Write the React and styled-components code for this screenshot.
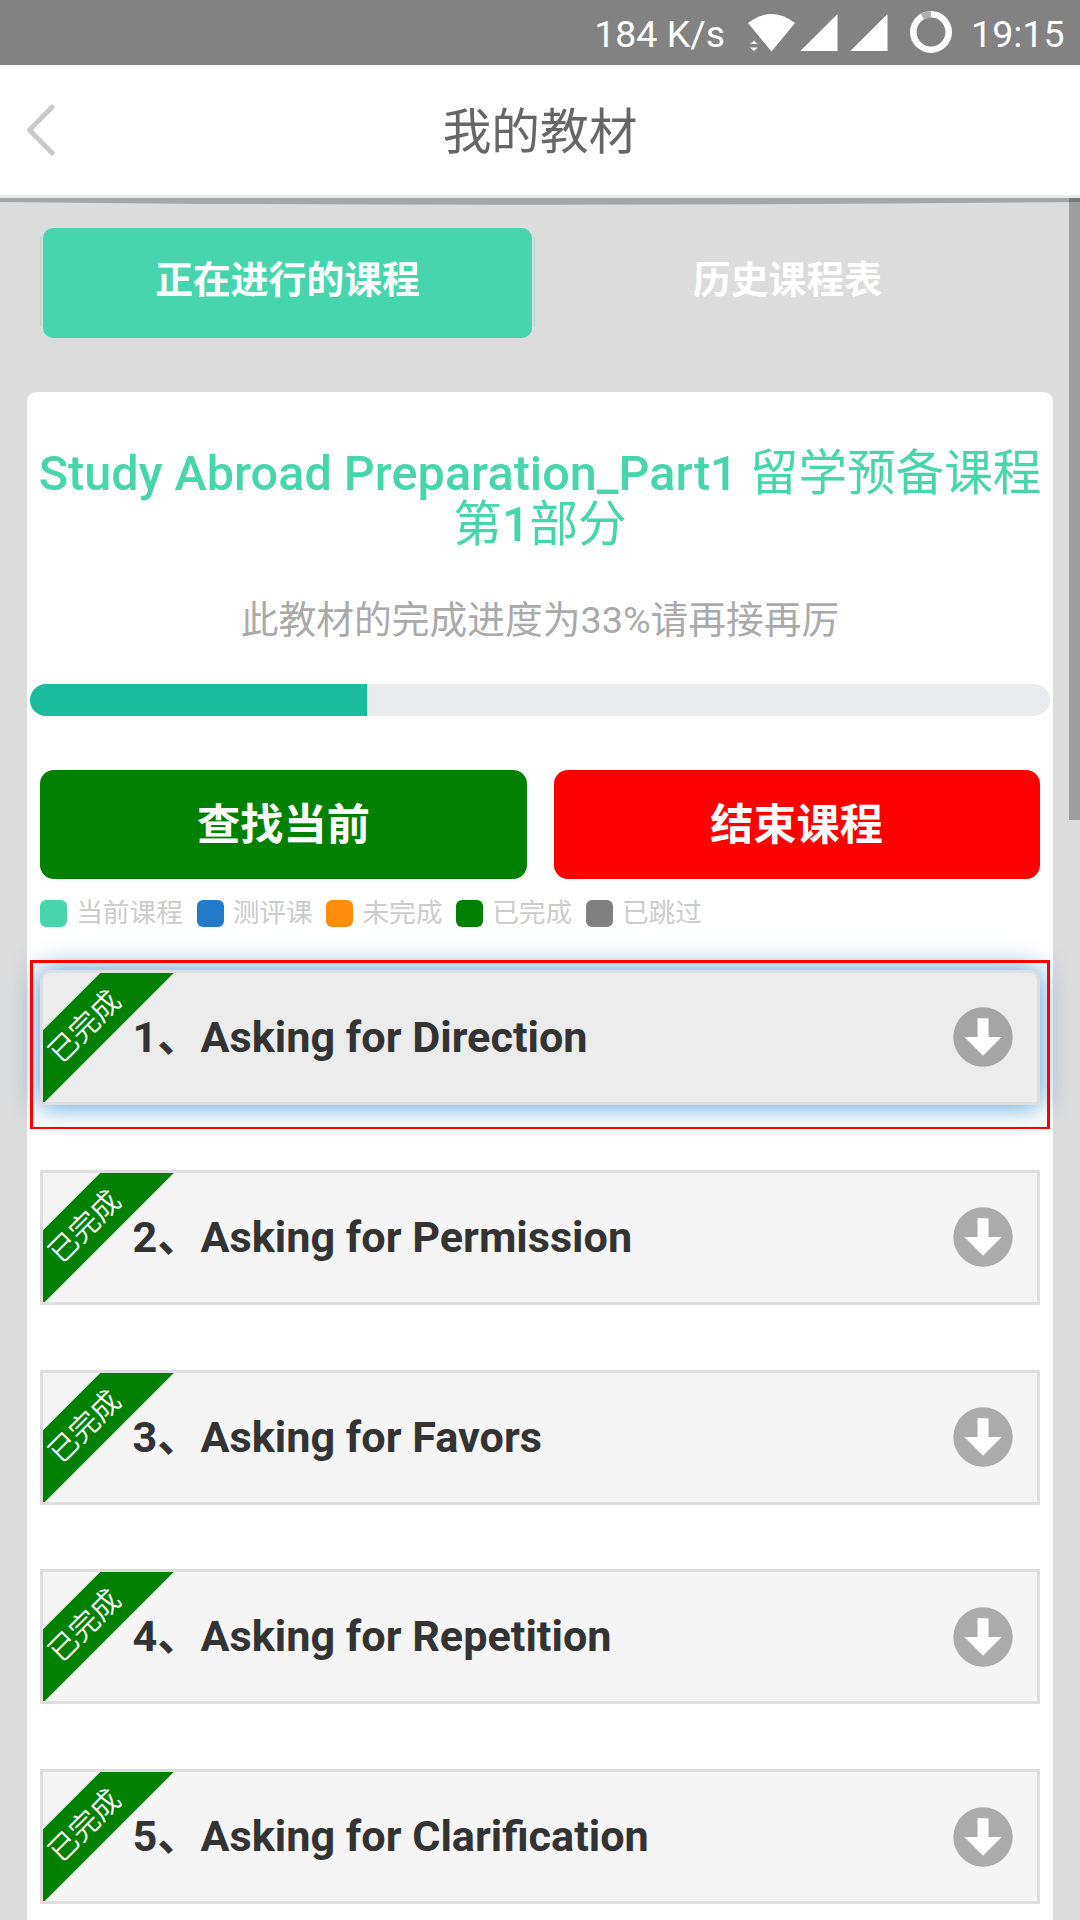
import styled, { createGlobalStyle } from "styled-components";

const lessons = [
  { id: 1, title: "Asking for Direction" },
  { id: 2, title: "Asking for Permission" },
  { id: 3, title: "Asking for Favors" },
  { id: 4, title: "Asking for Repetition" },
  { id: 5, title: "Asking for Clarification" },
];

const legend = [
  { label: "当前课程", color: "#47d5ae" },
  { label: "测评课", color: "#217bc8" },
  { label: "未完成", color: "#ff8c0a" },
  { label: "已完成", color: "#008000" },
  { label: "已跳过", color: "#808080" },
];

const progress = 33;

const StatusIcons = () => (
  <svg width="206" height="65" viewBox="0 0 206 65" fill="#fff">
    <path d="M2 23 Q25.5 5 49 23 L25.5 51.5 Z" />
    <path d="M3 44.5 L8 40 L13 44.5 Z M3 47 L13 47 L8 51.5 Z" stroke="#828282" strokeWidth="1" />
    <path d="M54.3 51 L91.5 14 V51 Z" />
    <path d="M104.3 51 L141.5 14 V51 Z" />
    <circle cx="185" cy="32" r="17.7" fill="none" stroke="#fff" strokeWidth="6.6" />
    <path d="M176.3 16.6 A17.7 17.7 0 0 1 185 14.3" fill="none" stroke="#b0b0b0" strokeWidth="6.8" />
  </svg>
);

const BackIcon = () => (
  <svg width="28" height="52" viewBox="0 0 28 52">
    <path d="M26.5 1.5 L2.5 26 L26.5 50.5" fill="none" stroke="#c8c8c8" strokeWidth="4.8" />
  </svg>
);

const DownIcon = ({ color }) => (
  <svg width="60" height="60" viewBox="0 0 60 60">
    <circle cx="30" cy="30" r="29.7" fill={color} />
    <path d="M24.5 11.3 H35.5 V30 H48.7 L30 48.7 L11.3 30 H24.5 Z" fill="#fff" />
  </svg>
);

const App = () => {
  return (
    <Screen>
      <GlobalStyle />
      <StatusBar>
        <Speed>184 K/s</Speed>
        <StatusIcons />
        <Clock>19:15</Clock>
      </StatusBar>
      <Header>
        <BackButton>
          <BackIcon />
        </BackButton>
        <HeaderTitle>我的教材</HeaderTitle>
      </Header>
      <Content>
        <Overscroll viewBox="0 0 1080 8" preserveAspectRatio="none">
          <path d="M0 0 H1080 V4 Q540 9.5 0 4 Z" fill="#a6a6a6" />
        </Overscroll>
        <Scrollbar />
        <Tabs>
          <Tab $active>正在进行的课程</Tab>
          <Tab>历史课程表</Tab>
        </Tabs>
        <Panel>
          <CourseTitle>
            Study Abroad Preparation_Part1 <Han>留学预备课程第</Han>1<Han>部分</Han>
          </CourseTitle>
          <ProgressText>此教材的完成进度为{progress}%请再接再厉</ProgressText>
          <ProgressBar>
            <ProgressFill style={{ width: `${progress}%` }} />
          </ProgressBar>
          <Buttons>
            <Button $color="#008000">查找当前</Button>
            <Button $color="#ff0000">结束课程</Button>
          </Buttons>
          <Legend>
            {legend.map((item) => (
              <LegendItem key={item.label}>
                <Swatch $color={item.color} />
                {item.label}
              </LegendItem>
            ))}
          </Legend>
          <LessonList>
            {lessons.map((lesson, index) => (
              <LessonFrame key={lesson.id} $selected={index === 0}>
                <LessonCard $selected={index === 0}>
                  <Ribbon>已完成</Ribbon>
                  <LessonTitle>
                    {lesson.id}、{lesson.title}
                  </LessonTitle>
                  <DownIcon color={index === 0 ? "#a5a5a5" : "#ababab"} />
                </LessonCard>
              </LessonFrame>
            ))}
          </LessonList>
        </Panel>
      </Content>
    </Screen>
  );
};

export default App;

const GlobalStyle = createGlobalStyle`
  * {
    box-sizing: border-box;
  }

  body {
    margin: 0;
    font-family: Roboto, "Noto Sans CJK SC", sans-serif;
  }
`;

const Screen = styled.div`
  width: 1080px;
  height: 1920px;
  display: flex;
  flex-direction: column;
  overflow: hidden;
  background: #dcdcdc;
`;

const StatusBar = styled.div`
  height: 65px;
  flex-shrink: 0;
  display: flex;
  align-items: center;
  justify-content: flex-end;
  padding-right: 15.5px;
  background: #828282;
  color: #fff;
  font-size: 37.5px;
  line-height: 62px;
`;

const Speed = styled.span`
  padding-top: 3px;
  margin-right: 21px;
`;

const Clock = styled.span`
  padding-top: 3px;
  margin-left: 19px;
`;

const Header = styled.header`
  height: 133px;
  flex-shrink: 0;
  display: grid;
  grid-template-columns: 100px 1fr 100px;
  align-items: center;
  background: #fff;
  border-bottom: 3px solid #e9e9f1;
`;

const BackButton = styled.div`
  display: flex;
  padding-left: 27px;
`;

const HeaderTitle = styled.h1`
  margin: 0;
  padding-top: 5px;
  text-align: center;
  font-size: 48.7px;
  font-weight: 400;
  line-height: 60px;
  color: #666;
`;

const Content = styled.main`
  position: relative;
  flex: 1;
  min-height: 0;
  padding: 30px 27px 0;
`;

const Overscroll = styled.svg`
  position: absolute;
  top: 0;
  left: 0;
  width: 1080px;
  height: 8px;
`;

const Scrollbar = styled.div`
  position: absolute;
  top: 0;
  right: 0;
  width: 11px;
  height: 622px;
  background: rgba(0, 0, 0, 0.28);
`;

const Tabs = styled.div`
  display: grid;
  grid-template-columns: 489px 489px;
  gap: 11px;
  padding-left: 16px;
`;

const Tab = styled.div`
  position: relative;
  height: 110px;
  display: flex;
  align-items: center;
  justify-content: center;
  padding-bottom: 13px;
  border-radius: 10px;
  background: ${(props) => (props.$active ? "#47d5ae" : "transparent")};
  color: #fff;
  font-size: 37.8px;
  font-weight: 700;

  &::before {
    content: "";
    display: ${(props) => (props.$active ? "block" : "none")};
    position: absolute;
    inset: 9px -3px 11px;
    border: solid #a9dccb;
    border-width: 0 1px;
  }
`;

const Panel = styled.section`
  width: 1026px;
  height: 1600px;
  margin-top: 54px;
  padding: 56px 3px 0;
  border-radius: 9px;
  background: #fff;
`;

const CourseTitle = styled.h2`
  margin: 0;
  text-align: center;
  font-size: 48.6px;
  font-weight: 500;
  line-height: 51px;
  color: #47d5ae;
`;

const Han = styled.span`
  font-weight: 400;
`;

const ProgressText = styled.p`
  margin: 45px 0 39px;
  text-align: center;
  font-size: 37.75px;
  line-height: 50px;
  color: #aaa;
`;

const ProgressBar = styled.div`
  height: 32px;
  border-radius: 16px;
  background: #eaebef;
  overflow: hidden;
`;

const ProgressFill = styled.div`
  height: 100%;
  background: #1bbc9b;
`;

const Buttons = styled.div`
  display: grid;
  grid-template-columns: 1fr 1fr;
  gap: 27px;
  margin: 54px 10.4px 0;
`;

const Button = styled.div`
  height: 108.6px;
  display: flex;
  align-items: center;
  justify-content: center;
  padding-bottom: 6px;
  border-radius: 14px;
  background: ${(props) => props.$color};
  color: #fff;
  font-size: 43.2px;
  font-weight: 700;
`;

const Legend = styled.div`
  display: flex;
  gap: 13.7px;
  height: 27px;
  margin: 21.4px 10.2px 33px;
`;

const LegendItem = styled.div`
  display: flex;
  align-items: center;
  font-size: 26.7px;
  line-height: 27px;
  color: #ccc;
`;

const Swatch = styled.span`
  width: 27px;
  height: 27px;
  margin-right: 9px;
  border-radius: 6px;
  background: ${(props) => props.$color};
`;

const LessonList = styled.div`
  display: flex;
  flex-direction: column;
  gap: 30.8px;
`;

const LessonFrame = styled.div`
  position: relative;
  height: 169px;
  flex-shrink: 0;
  padding: 10px 10px 0;

  &::after {
    content: "";
    display: ${(props) => (props.$selected ? "block" : "none")};
    position: absolute;
    inset: 0;
    border: 3px solid #ff0000;
    border-bottom-width: 2px;
  }
`;

const LessonCard = styled.div`
  position: relative;
  height: 135px;
  display: flex;
  align-items: center;
  justify-content: space-between;
  padding: 0 24px 0 89.5px;
  overflow: hidden;
  border: 3px solid #dedede;
  border-radius: ${(props) => (props.$selected ? "10px 10px 0 0" : "0")};
  background: ${(props) => (props.$selected ? "#ececec" : "#f5f5f5")};
  box-shadow: ${(props) => (props.$selected ? "0 0 28px rgba(51, 136, 204, 0.9)" : "none")};
`;

const Ribbon = styled.div`
  position: absolute;
  top: 21px;
  left: -53px;
  width: 200px;
  height: 52px;
  padding-right: 17px;
  transform: rotate(-45deg);
  background: #008000;
  color: #fff;
  text-align: center;
  font-size: 29.3px;
  font-weight: 350;
  line-height: 55px;
`;

const LessonTitle = styled.div`
  padding-bottom: 9px;
  font-size: 43.2px;
  font-weight: 700;
  color: #333;
`;
